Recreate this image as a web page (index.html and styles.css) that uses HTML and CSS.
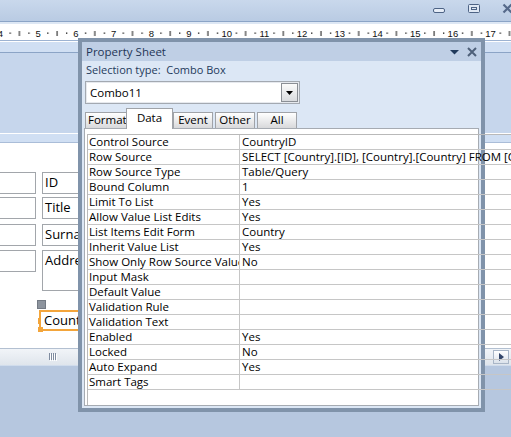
FILE: index.html
```html
<!DOCTYPE html>
<html>
<head>
<meta charset="utf-8">
<link rel="stylesheet" href="styles.css">
</head>
<body>
<div class="app">
  <div class="apptitle">
    <svg class="winctl" width="80" height="21" viewBox="0 0 80 21">
      <rect x="2.5" y="8.5" width="11" height="4" rx="1.5" fill="#e6edf7" stroke="#4d6385"/>
      <rect x="37.5" y="4.5" width="11" height="8" rx="1" fill="#dfe8f4" stroke="#4d6385"/>
      <rect x="40.5" y="7.5" width="5" height="2" fill="none" stroke="#4d6385"/>
      <path d="M72.5 4.5 L80.5 12.5 M80.5 4.5 L72.5 12.5" stroke="#55698a" stroke-width="2.2"/>
    </svg>
  </div>
  <div class="ruler">
    <svg width="511" height="16" viewBox="0 0 511 16">
      <defs>
        <pattern id="tk" x="0.5" y="0" width="37.7" height="16" patternUnits="userSpaceOnUse">
          <rect x="9" y="8.5" width="1.3" height="1.3" fill="#111"/>
          <rect x="18.4" y="7" width="1" height="5" fill="#111"/>
          <rect x="27.8" y="8.5" width="1.3" height="1.3" fill="#111"/>
        </pattern>
      </defs>
      <rect width="511" height="16" fill="url(#tk)"/>
      <g class="rnum" text-anchor="middle">
        <text x="0.5" y="13">4</text>
        <text x="38.2" y="13">5</text>
        <text x="75.9" y="13">6</text>
        <text x="113.6" y="13">7</text>
        <text x="151.3" y="13">8</text>
        <text x="189" y="13">9</text>
        <text x="226.7" y="13">10</text>
        <text x="264.4" y="13">11</text>
        <text x="302.1" y="13">12</text>
        <text x="339.8" y="13">13</text>
        <text x="377.5" y="13">14</text>
        <text x="415.2" y="13">15</text>
        <text x="452.9" y="13">16</text>
        <text x="490.6" y="13">17</text>
      </g>
    </svg>
  </div>
  <div class="secbar"></div>
  <div class="hdrsec"></div>
  <div class="secbar detailbar"></div>
  <div class="detail">
    <div class="ctl tb tb1"></div>
    <div class="ctl lbl tb1">ID</div>
    <div class="ctl tb tb2"></div>
    <div class="ctl lbl tb2">Title</div>
    <div class="ctl tb tb3"></div>
    <div class="ctl lbl tb3">Surname</div>
    <div class="ctl tb tb4"></div>
    <div class="ctl lbl tb4 tall">Address</div>
    <div class="movehandle"></div>
    <div class="sel">Country<span class="h h-bl"></span><span class="h h-tl"></span></div>
  </div>
  <div class="hscroll">
    <svg class="grip" width="8" height="8" viewBox="0 0 8 8">
      <path d="M0.5 0 V7 M2.5 0 V7 M4.5 0 V7 M6.5 0 V7" stroke="#7f8ca0"/>
      <path d="M1.5 1 V8 M3.5 1 V8 M5.5 1 V8 M7.5 1 V8" stroke="#ffffff"/>
    </svg>
    <div class="rarrow">
      <svg width="14" height="12" viewBox="0 0 14 12"><path d="M5 2 L10 6 L5 10 Z" fill="#33466a"/></svg>
    </div>
  </div>
  <div class="bottom"></div>

  <div class="ps">
    <div class="ps-title">
      <span class="ps-title-text">Property Sheet</span>
      <svg class="ps-ctl" width="30" height="19" viewBox="0 0 30 19">
        <path d="M2 8 L11 8 L6.5 12.5 Z" fill="#213a5c"/>
        <path d="M20 6 L28 14 M28 6 L20 14" stroke="#4e6079" stroke-width="2"/>
      </svg>
    </div>
    <div class="ps-body">
      <div class="seltype">Selection type:&nbsp; Combo Box</div>
      <div class="combo">
        <span class="combo-text">Combo11</span>
        <span class="combo-btn">
          <svg width="15" height="17" viewBox="0 0 15 17"><path d="M4 7 L11 7 L7.5 11 Z" fill="#000"/></svg>
        </span>
      </div>
      <div class="tabs">
        <div class="tab tab-format">Format</div>
        <div class="tab tab-data">Data</div>
        <div class="tab tab-event">Event</div>
        <div class="tab">Other</div>
        <div class="tab">All</div>
      </div>
      <div class="panel">
        <div class="grid">
          <div class="row"><div class="k">Control Source</div><div class="v">CountryID</div></div>
          <div class="row"><div class="k">Row Source</div><div class="v">SELECT [Country].[ID], [Country].[Country] FROM [Country];</div></div>
          <div class="row"><div class="k">Row Source Type</div><div class="v">Table/Query</div></div>
          <div class="row"><div class="k">Bound Column</div><div class="v">1</div></div>
          <div class="row"><div class="k">Limit To List</div><div class="v">Yes</div></div>
          <div class="row"><div class="k">Allow Value List Edits</div><div class="v">Yes</div></div>
          <div class="row"><div class="k">List Items Edit Form</div><div class="v v-dd"><span>Country</span><span class="dd"><svg width="14" height="9" viewBox="0 0 14 9"><path d="M4 5 L10 5 L7 8 Z" fill="#000"/></svg></span></div></div>
          <div class="row"><div class="k">Inherit Value List</div><div class="v">Yes</div></div>
          <div class="row"><div class="k">Show Only Row Source Values</div><div class="v">No</div></div>
          <div class="row"><div class="k">Input Mask</div><div class="v"></div></div>
          <div class="row"><div class="k">Default Value</div><div class="v"></div></div>
          <div class="row"><div class="k">Validation Rule</div><div class="v"></div></div>
          <div class="row"><div class="k">Validation Text</div><div class="v"></div></div>
          <div class="row"><div class="k">Enabled</div><div class="v">Yes</div></div>
          <div class="row"><div class="k">Locked</div><div class="v">No</div></div>
          <div class="row"><div class="k">Auto Expand</div><div class="v">Yes</div></div>
          <div class="row"><div class="k">Smart Tags</div><div class="v"></div></div>
        </div>
      </div>
    </div>
  </div>
</div>
</body>
</html>
```

FILE: styles.css
```css
* { box-sizing: border-box; margin: 0; padding: 0; }
html, body { width: 511px; height: 437px; overflow: hidden; }
body {
  font-family: "Open Sans", "Noto Sans", sans-serif;
  font-size: 11px;
  color: #000;
  background: #b6c7df;
}
.app {
  position: relative;
  width: 511px;
  height: 437px;
  display: flex;
  flex-direction: column;
  overflow: hidden;
}
.apptitle {
  height: 22px;
  flex: none;
  border-bottom: 1px solid #8ba4c6;
  background: linear-gradient(#c9d8ec, #b9cbe3);
  display: flex;
  justify-content: flex-end;
}
.winctl { display: block; }
.ruler {
  height: 19px;
  flex: none;
  border-top: 2px solid #dde7f4;
  border-bottom: 1px solid #9db3d2;
  background: #fff;
}
.ruler svg { display: block; }
.rnum { font-family: "Liberation Sans", Arial, sans-serif; font-size: 9.5px; fill: #111; }
.secbar {
  height: 12px;
  flex: none;
  border-top: 1px solid #ffffff;
  border-bottom: 1px solid #8ba4c6;
  background: #d0dff3;
}
.hdrsec { height: 80px; flex: none; background: #c6d6ec; }
.detailbar { height: 10px; border-bottom-color: #aabdd8; }
.detail { height: 205px; flex: none; background: #fff; position: relative; }
.ctl {
  position: absolute;
  height: 22px;
  border: 1px solid #a2a6ab;
  background: #fff;
  font-size: 13px;
  line-height: 19px;
  white-space: nowrap;
  overflow: hidden;
}
.tb { left: -2px; width: 38px; }
.lbl { left: 42px; width: 60px; padding-left: 2px; }
.tb1 { top: 29px; }
.tb2 { top: 54px; }
.tb3 { top: 81px; }
.tb4 { top: 107px; }
.tall { height: 41px; }
.movehandle {
  position: absolute;
  left: 37px;
  top: 157px;
  width: 9px;
  height: 9px;
  background: #8d949e;
  border: 1px solid #737a84;
}
.sel {
  position: absolute;
  left: 39px;
  top: 167px;
  width: 50px;
  height: 21px;
  border: 2px solid #f3a53b;
  font-size: 13px;
  line-height: 17px;
  padding-left: 3px;
  white-space: nowrap;
}
.h { position: absolute; width: 5px; height: 5px; background: #f3a53b; }
.h-bl { left: -3px; bottom: -3px; }
.h-tl { left: -3px; top: 6px; height: 6px; width: 3px; }
.hscroll {
  height: 17px;
  flex: none;
  border-top: 1px solid #b3c0d1;
  background: linear-gradient(#f1f4f8, #dfe5ec);
  display: flex;
  align-items: center;
}
.grip { margin-left: 49px; display: block; }
.rarrow {
  margin-left: auto;
  margin-right: 2px;
  width: 16px;
  height: 14px;
  border: 1px solid #a9b6c7;
  background: linear-gradient(#ffffff, #dbe2eb);
}
.rarrow svg { display: block; }
.bottom {
  flex: 1;
  border-top: 1px solid #d0dcec;
  background: #b6c7df;
}

/* property sheet */
.ps {
  position: absolute;
  left: 78px;
  top: 38px;
  width: 407px;
  height: 374px;
  border: 4px solid #8093aa;
  display: flex;
  flex-direction: column;
  background: #dce7f5;
  z-index: 5;
}
.ps-title {
  height: 19px;
  flex: none;
  background: #bfcfe5;
  display: flex;
  align-items: center;
  justify-content: space-between;
  padding-left: 4px;
}
.ps-title-text { font-size: 11.5px; color: #1f3657; line-height: 19px; }
.ps-ctl { display: block; margin-right: 3px; }
.ps-body {
  flex: 1;
  display: flex;
  flex-direction: column;
  padding: 0 2px;
}
.seltype {
  height: 18px;
  line-height: 18px;
  padding-left: 2px;
  color: #243b5c;
  flex: none;
}
.combo {
  flex: none;
  margin: 2px 0 0 1px;
  width: 215px;
  height: 23px;
  border: 1px solid #a3a9b1;
  box-shadow: inset 0 0 0 1px #e6e9ee;
  background: #fff;
  display: flex;
  align-items: center;
  padding: 1px;
  font-size: 11.5px;
}
.combo-text { padding-left: 3px; }
.combo-btn {
  margin-left: auto;
  width: 17px;
  height: 19px;
  border: 1px solid #8b8f95;
  background: linear-gradient(#fbfbfb, #d9dbde);
}
.combo-btn svg { display: block; }
.tabs {
  flex: none;
  display: flex;
  align-items: flex-end;
  height: 20px;
  margin-top: 4px;
  padding-left: 1px;
  font-size: 11.5px;
}
.tab {
  width: 40px;
  height: 16px;
  margin-left: 2px;
  border: 1px solid #a0a3a8;
  border-bottom: none;
  background: linear-gradient(#ffffff, #d8d9db);
  text-align: center;
  line-height: 14px;
  white-space: nowrap;
  overflow: hidden;
}
.tab-format { width: 43px; margin-left: 0; text-align: left; padding-left: 2px; }
.tab-data {
  width: 47px;
  height: 21px;
  margin-left: -2px;
  margin-bottom: -1px;
  background: #fff;
  line-height: 18px;
  position: relative;
  z-index: 1;
}
.tab-event { margin-left: 0; }
.panel {
  flex: 1;
  margin-bottom: 2px;
  background: #fff;
  border: 1px solid #a6abb2;
  padding: 5px 0 0 2px;
  display: flex;
}
.grid {
  flex: 1;
  border: 1px solid #b9b9b9;
  border-bottom: none;
  font-size: 11.5px;
}
.row {
  display: flex;
  height: 15px;
  border-bottom: 1px solid #c6c6c6;
}
.k {
  width: 152px;
  flex: none;
  border-right: 1px solid #c6c6c6;
  padding-left: 1px;
  line-height: 14px;
  white-space: nowrap;
  overflow: hidden;
}
.v {
  flex: 1;
  min-width: 0;
  padding-left: 2px;
  line-height: 14px;
  white-space: nowrap;
  overflow: hidden;
}
.v-dd {
  display: flex;
  align-items: center;
  justify-content: space-between;
  padding-right: 1px;
}
.dd {
  width: 16px;
  height: 11px;
  border: 1px solid #9c9c9c;
  background: linear-gradient(#fdfdfd, #d6d6d6);
}
.dd svg { display: block; }
```
